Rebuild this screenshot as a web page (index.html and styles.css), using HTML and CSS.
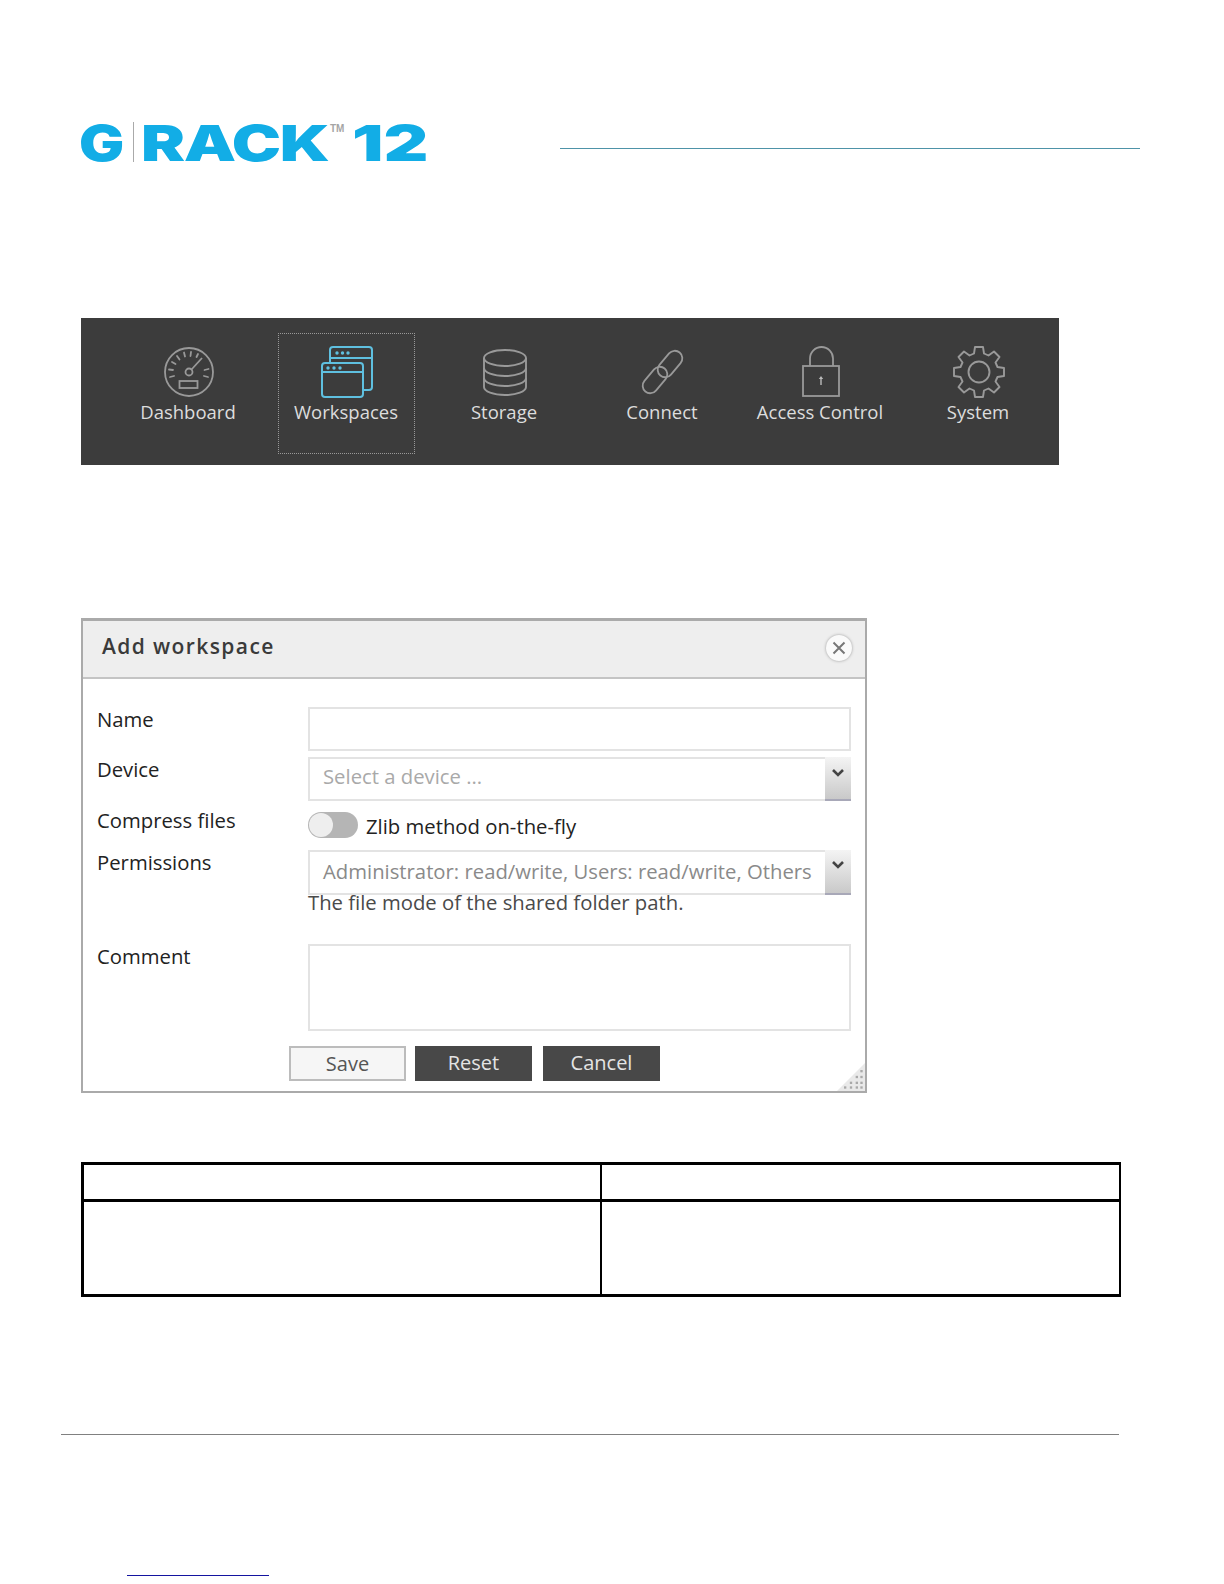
FILE: index.html
```html
<!DOCTYPE html>
<html lang="en">
<head>
<meta charset="utf-8">
<title>G-RACK 12 Workspaces</title>
<link rel="stylesheet" href="styles.css">
</head>
<body>
<header class="header">
  <div class="logo">
    <span class="logo-g">G</span><span class="logo-bar"></span><span class="logo-rack">RACK</span><span class="logo-tm">TM</span><span class="logo-num">12</span>
  </div>
  <div class="header-rule"></div>
</header>

<nav class="nav">
  <div class="nav-item">
    <svg class="nav-icon" viewBox="0 0 56 56"><g fill="none" stroke="#999" stroke-width="1.800"><circle cx="29" cy="28" r="24"/><circle cx="29" cy="28" r="3.500"/><path d="M31.500 25.500 42 14"/><rect x="19.500" y="37" width="18" height="7"/><path d="M10 33l4-1M9 25.500l4 .5M12 18l3.500 2M17 12l2.500 3.500M24 8.500l1 4M31 8l-.5 4M38 10l-1.500 3M48.500 25l-4 1M48 33l-4-1" stroke-linecap="round"/></g></svg>
    <span>Dashboard</span>
  </div>
  <div class="nav-item nav-active">
    <svg class="nav-icon" viewBox="0 0 56 56"><g fill="none" stroke="#5fc0e0" stroke-width="2"><path d="M12 18V6a3 3 0 0 1 3-3h36a3 3 0 0 1 3 3v37a3 3 0 0 1-3 3h-6"/><path d="M12 14h42"/><rect x="4" y="19" width="41" height="34" rx="3"/><path d="M4 28h41"/></g><g fill="#5fc0e0"><circle cx="19" cy="9" r="1.700"/><circle cx="24.500" cy="9" r="1.700"/><circle cx="30" cy="9" r="1.700"/><circle cx="10" cy="24" r="1.700"/><circle cx="16" cy="24" r="1.700"/><circle cx="22" cy="24" r="1.700"/></g></svg>
    <span>Workspaces</span>
  </div>
  <div class="nav-item">
    <svg class="nav-icon" viewBox="0 0 56 56"><g fill="none" stroke="#999" stroke-width="1.900"><ellipse cx="29" cy="14" rx="21" ry="8"/><path d="M8 14v29c0 4.400 9.400 8 21 8s21-3.600 21-8V14"/><path d="M8 24c0 4.400 9.400 8 21 8s21-3.600 21-8"/><path d="M8 34c0 4.400 9.400 8 21 8s21-3.600 21-8"/></g></svg>
    <span>Storage</span>
  </div>
  <div class="nav-item">
    <svg class="nav-icon" viewBox="0 0 56 56"><g fill="none" stroke="#999" stroke-width="1.800"><rect x="21" y="12.500" width="30" height="15" rx="7.500" transform="rotate(-50 36 20)"/><rect x="6" y="28.500" width="30" height="15" rx="7.500" transform="rotate(-50 21 36)"/></g></svg>
    <span>Connect</span>
  </div>
  <div class="nav-item">
    <svg class="nav-icon" viewBox="0 0 56 56"><g fill="none" stroke="#999" stroke-width="1.800"><rect x="11" y="22" width="36" height="30"/><path d="M18 22V14.500a11.500 11.500 0 0 1 23 0V22"/></g><path d="M29 32l-2.200 3h1.500v6h1.400v-6h1.500z" fill="#bbb"/></svg>
    <span>Access Control</span>
  </div>
  <div class="nav-item">
    <svg class="nav-icon" viewBox="0 0 56 56"><g fill="none" stroke="#999" stroke-width="1.900" stroke-linejoin="round" transform="translate(1 0)"><circle cx="28" cy="28" r="10.500"/><path d="M24 3h8l1 6.500 4.500 2 5.500-4 5.500 5.500-4 5.500 2 4.500 6.500 1v8l-6.500 1-2 4.500 4 5.500-5.500 5.500-5.500-4-4.500 2-1 6.500h-8l-1-6.500-4.500-2-5.500 4-5.500-5.500 4-5.500-2-4.500-6.500-1v-8l6.500-1 2-4.500-4-5.500 5.500-5.500 5.500 4 4.500-2z"/></g></svg>
    <span>System</span>
  </div>
</nav>

<section class="dialog">
  <div class="dialog-head">
    <h2 class="dialog-title">Add workspace</h2>
    <span class="dialog-close"><svg viewBox="0 0 16 16"><path d="M2.500 2.500l11 11M13.500 2.500l-11 11" stroke="#777" stroke-width="2" fill="none"/></svg></span>
  </div>
  <div class="dialog-body">
    <div class="row row-name">
      <label class="label">Name</label>
      <div class="field input"></div>
    </div>
    <div class="row row-device">
      <label class="label">Device</label>
      <div class="field select"><span class="select-text">Select a device ...</span><span class="select-btn"><svg viewBox="0 0 14 10"><path d="M2 2l5 5 5-5" fill="none" stroke="#444" stroke-width="2.600"/></svg></span></div>
    </div>
    <div class="row row-compress">
      <label class="label">Compress files</label>
      <div class="toggle-line"><span class="toggle"><span class="toggle-knob"></span></span><span class="toggle-text">Zlib method on-the-fly</span></div>
    </div>
    <div class="row row-perm">
      <label class="label">Permissions</label>
      <div class="perm-col">
        <div class="field select"><span class="select-text select-dark">Administrator: read/write, Users: read/write, Others</span><span class="select-btn"><svg viewBox="0 0 14 10"><path d="M2 2l5 5 5-5" fill="none" stroke="#444" stroke-width="2.600"/></svg></span></div>
        <p class="hint">The file mode of the shared folder path.</p>
      </div>
    </div>
    <div class="row row-comment">
      <label class="label">Comment</label>
      <div class="field textarea"></div>
    </div>
    <div class="buttons">
      <button class="btn btn-light">Save</button>
      <button class="btn btn-dark">Reset</button>
      <button class="btn btn-dark btn-last">Cancel</button>
    </div>
  </div>
  <svg class="grip" viewBox="0 0 24 24"><path d="M24 0v24H0z" fill="#e9e9e9"/><g fill="#a9a9a9"><rect x="20" y="6" width="2" height="2"/><rect x="16" y="11" width="2" height="2"/><rect x="20" y="11" width="2" height="2"/><rect x="11" y="16" width="2" height="2"/><rect x="16" y="16" width="2" height="2"/><rect x="20" y="16" width="2" height="2"/><rect x="6" y="20" width="2" height="2"/><rect x="11" y="20" width="2" height="2"/><rect x="16" y="20" width="2" height="2"/><rect x="20" y="20" width="2" height="2"/></g></svg>
</section>

<table class="table">
  <tr class="tr-head"><td></td><td></td></tr>
  <tr class="tr-body"><td></td><td></td></tr>
</table>

<div class="footer-rule"></div>
<div class="footer-link"></div>
</body>
</html>
```
FILE: styles.css
```css
* { box-sizing: border-box; }
html, body { margin: 0; padding: 0; }
body {
  width: 1224px;
  height: 1584px;
  overflow: hidden;
  background: #fff;
  font-family: "Open Sans", sans-serif;
  color: #222;
}
.header {
  display: flex;
  align-items: flex-start;
  padding: 122px 0 0 79px;
  height: 318px;
}
.logo {
  display: flex;
  align-items: flex-start;
  width: 481px;
  height: 42px;
  color: #12ade6;
  font-family: Inter, sans-serif;
  font-weight: 900;
  font-size: 50px;
  line-height: 42px;
}
.logo-g { display: inline-block; width: 44px; transform: scaleX(1.2); transform-origin: left center; }
.logo-bar { width: 1px; height: 40px; background: #aaa; margin: 0 7px 0 10px; }
.logo-rack { display: inline-block; width: 187px; letter-spacing: -1px; transform: scaleX(1.32); transform-origin: left center; }
.logo-tm { font: 700 10px/10px "Liberation Sans", sans-serif; color: #a5a5a5; margin: 2px 6px 0 2px; width: 16px; }
.logo-num { display: inline-block; letter-spacing: 0; transform: scaleX(1.39); transform-origin: left center; }
.header-rule {
  width: 580px;
  height: 1px;
  margin-top: 26px;
  background: #4e93a8;
}
.nav {
  display: flex;
  width: 978px;
  height: 147px;
  margin-left: 81px;
  padding: 15px 0 0 28px;
  background: #3c3c3c;
  color: #ddd;
  font-size: 18.500px;
}
.nav-item {
  display: flex;
  flex-direction: column;
  align-items: center;
  width: 158px;
  height: 120px;
  padding-top: 11px;
  line-height: 26px;
  white-space: nowrap;
}
.nav-item span { margin-top: -1px; }
.nav-icon { width: 56px; height: 56px; flex: none; }
.nav-active { position: relative; }
.nav-active::after {
  content: "";
  position: absolute;
  left: 11px;
  top: 0;
  width: 135px;
  height: 119px;
  border: 1px dotted #999;
}
.dialog {
  position: relative;
  width: 786px;
  height: 475px;
  margin: 153px 0 0 81px;
  border: 2px solid #aaa;
  border-top-width: 3px;
  border-bottom-width: 2px;
}
.dialog-head {
  display: flex;
  align-items: center;
  justify-content: space-between;
  height: 58px;
  padding: 0 13px 3px 19px;
  background: #eee;
  border-bottom: 2px solid #c4c4c4;
}
.dialog-title {
  margin: 0 0 3px;
  font-size: 21px;
  font-weight: 600;
  letter-spacing: 1.400px;
  color: #3a3a3a;
}
.dialog-close {
  display: flex;
  align-items: center;
  justify-content: center;
  width: 26px;
  height: 26px;
  border-radius: 50%;
  background: #fafafa;
  box-shadow: 0 0 3px #999;
}
.dialog-close svg { width: 16px; height: 16px; }
.dialog-body { padding: 28px 13px 0 14px; }
.row { display: flex; }
.label {
  width: 211px;
  flex: none;
  font-size: 20.300px;
  line-height: 28px;
  color: #222;
}
.field { border: 2px solid #e3e3e3; background: #fff; }
.input { width: 543px; height: 44px; }
.select { display: flex; position: relative; width: 543px; height: 44px; }
.select-text {
  padding-left: 13px;
  font-size: 20.300px;
  line-height: 35px;
  color: #a9a9a9;
  white-space: nowrap;
}
.select-dark { color: #8a8a8a; line-height: 39px; }
.select-btn {
  position: absolute;
  right: -2px;
  top: -2px;
  width: 26px;
  height: calc(100% + 4px);
  padding-top: 10px;
  text-align: center;
  background: linear-gradient(#f4f4f4, #c9c9c9);
  border-bottom: 2px solid #a8a8b8;
}
.select-btn svg { display: block; width: 14px; height: 10px; margin: 0 auto; }
.row-name .label { margin-top: -2px; }
.row-device { margin-top: 6px; }
.row-device .label { margin-top: -2px; }
.row-device .select-btn { padding-top: 11px; }
.row-compress { margin-top: 10px; height: 39px; }
.row-compress .label { margin-top: -5px; }
.toggle-line { display: flex; align-items: flex-start; padding-top: 1px; }
.toggle {
  display: block;
  width: 50px;
  height: 26px;
  border-radius: 13px;
  background: #b5b5b5;
  padding: 1px;
}
.toggle-knob { display: block; width: 24px; height: 24px; border-radius: 50%; background: #eee; }
.toggle-text { margin-left: 8px; font-size: 20.300px; line-height: 28px; color: #222; }
.row-perm .label { margin-top: -2px; }
.perm-col { width: 543px; }
.perm-col .select { height: 45px; }
.hint { margin: -7px 0 0; font-size: 20.300px; line-height: 28px; color: #4a4a4a; }
.row-comment { margin-top: 28px; }
.row-comment .label { margin-top: -2px; }
.textarea { width: 543px; height: 87px; }
.buttons {
  display: flex;
  gap: 9px;
  margin: 15px 0 0 192px;
}
.btn {
  width: 117px;
  height: 35px;
  padding: 0 0 2px;
  font: 20px/31px "Open Sans", sans-serif;
  cursor: pointer;
}
.btn-light { background: #f6f6f6; color: #555; border: 2px solid #bcbcbc; }
.btn-dark { background: #484848; color: #e4e4e4; border: 0; }
.btn-last { margin-left: 2px; }
.grip { position: absolute; right: 0; bottom: 0; width: 28px; height: 28px; }
.table {
  width: 1040px;
  height: 135px;
  margin: 69px 0 0 81px;
  border-collapse: collapse;
  table-layout: fixed;
  border: 3px solid #000;
  border-right-width: 2px;
}
.table td { border: 2px solid #000; padding: 0; }
.tr-head td { height: 37px; border-bottom-width: 3px; }
.table td:first-child { width: 518px; }
.footer-rule {
  width: 1058px;
  height: 1px;
  margin: 137px 0 0 61px;
  background: #808080;
}
.footer-link {
  width: 142px;
  height: 1px;
  margin: 140px 0 0 127px;
  background: #1414a0;
}
```
